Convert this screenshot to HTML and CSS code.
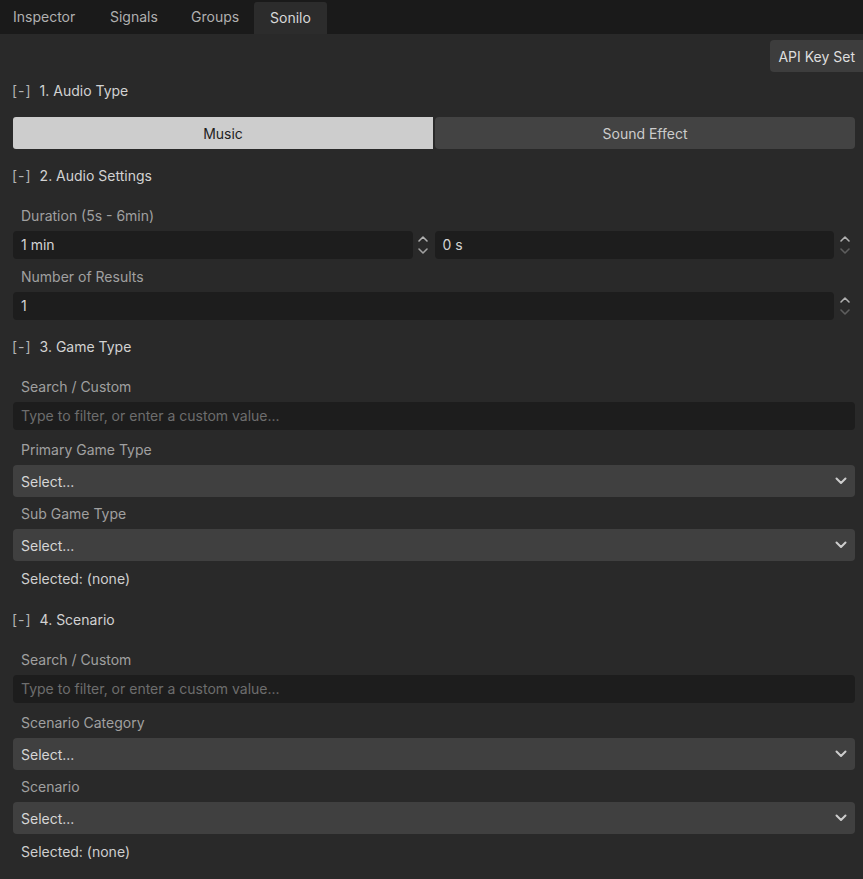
FILE: index.html
```html
<!DOCTYPE html>
<html lang="en">
<head>
  <meta charset="UTF-8">
  <title>Sonilo</title>
  <link rel="stylesheet" href="styles.css">
</head>
<body>
  <div class="tabs">
    <div class="tab">Inspector</div>
    <div class="tab">Signals</div>
    <div class="tab">Groups</div>
    <div class="tab active">Sonilo</div>
  </div>

  <div class="panel">
    <div class="top-row">
      <button class="btn api-btn">API Key Set</button>
    </div>

    <div class="section-head"><span class="fold">[-]</span> 1. Audio Type</div>
    <div class="toggle">
      <button class="toggle-btn selected">Music</button>
      <button class="toggle-btn">Sound Effect</button>
    </div>

    <div class="section-head"><span class="fold">[-]</span> 2. Audio Settings</div>
    <div class="section-body">
      <div class="label">Duration (5s - 6min)</div>
      <div class="num-row">
        <div class="num-group">
          <div class="input">1 min</div>
          <div class="spin">
            <svg width="12" height="20" viewBox="0 0 12 20"><path d="M2 6 L6 2 L10 6" class="up"/><path d="M2 14 L6 18 L10 14" class="down"/></svg>
          </div>
        </div>
        <div class="num-group">
          <div class="input">0 s</div>
          <div class="spin">
            <svg width="12" height="20" viewBox="0 0 12 20"><path d="M2 6 L6 2 L10 6" class="up"/><path d="M2 14 L6 18 L10 14" class="down off"/></svg>
          </div>
        </div>
      </div>
      <div class="label">Number of Results</div>
      <div class="num-row">
        <div class="num-group">
          <div class="input">1</div>
          <div class="spin">
            <svg width="12" height="20" viewBox="0 0 12 20"><path d="M2 6 L6 2 L10 6" class="up"/><path d="M2 14 L6 18 L10 14" class="down off"/></svg>
          </div>
        </div>
      </div>
    </div>

    <div class="section-head"><span class="fold">[-]</span> 3. Game Type</div>
    <div class="section-body">
      <div class="label">Search / Custom</div>
      <div class="input search placeholder">Type to filter, or enter a custom value...</div>
      <div class="label">Primary Game Type</div>
      <div class="select">Select...
        <svg width="12" height="8" viewBox="0 0 12 8"><path d="M1.5 1.5 L6 6 L10.5 1.5"/></svg>
      </div>
      <div class="label">Sub Game Type</div>
      <div class="select">Select...
        <svg width="12" height="8" viewBox="0 0 12 8"><path d="M1.5 1.5 L6 6 L10.5 1.5"/></svg>
      </div>
      <div class="selected-text">Selected: (none)</div>
    </div>

    <div class="section-head"><span class="fold">[-]</span> 4. Scenario</div>
    <div class="section-body">
      <div class="label">Search / Custom</div>
      <div class="input search placeholder">Type to filter, or enter a custom value...</div>
      <div class="label">Scenario Category</div>
      <div class="select">Select...
        <svg width="12" height="8" viewBox="0 0 12 8"><path d="M1.5 1.5 L6 6 L10.5 1.5"/></svg>
      </div>
      <div class="label">Scenario</div>
      <div class="select">Select...
        <svg width="12" height="8" viewBox="0 0 12 8"><path d="M1.5 1.5 L6 6 L10.5 1.5"/></svg>
      </div>
      <div class="selected-text">Selected: (none)</div>
    </div>
  </div>
</body>
</html>
```

FILE: styles.css
```css
:root {
  --bg: #292929;
  --tabbar: #1a1a1a;
  --tab-active: #2c2c2c;
  --field: #1d1d1d;
  --select: #404040;
  --text: #cfcfcf;
  --muted: #a0a0a0;
}

* {
  margin: 0;
  padding: 0;
  box-sizing: border-box;
}

body {
  background: var(--bg);
  font-family: Inter, 'Noto Sans', sans-serif;
  font-size: 14px;
  color: var(--text);
  overflow: hidden;
}

/* tab strip */
.tabs {
  display: flex;
  height: 34px;
  background: var(--tabbar);
}

.tab {
  line-height: 34px;
  color: #b0b0b0;
}

.tab:nth-child(1) { width: 96px; padding-left: 13px; }
.tab:nth-child(2) { width: 80px; padding-left: 14px; }
.tab:nth-child(3) { width: 78px; padding-left: 15px; }

.tab.active {
  width: 73px;
  padding-left: 16px;
  margin-top: 2px;
  line-height: 32px;
  background: var(--tab-active);
  color: #d8d8d8;
  border-radius: 3px 3px 0 0;
}

.panel {
  display: flex;
  flex-direction: column;
  padding: 0 8px 0 13px;
}

.top-row {
  display: flex;
  justify-content: flex-end;
  margin-top: 6px;
  margin-right: -14px;
}

.btn {
  font-family: inherit;
  font-size: 14px;
  border: none;
}

.api-btn {
  height: 32px;
  padding: 0 14px 0 8px;
  background: #3d3d3d;
  color: #dedede;
  border-radius: 4px;
}

.section-head {
  height: 28px;
  line-height: 28px;
  margin-top: 13px;
  margin-left: -1px;
  color: #d2d2d2;
}

.top-row + .section-head {
  margin-top: 5px;
}

.fold {
  color: #b4b4b4;
  margin-right: 4px;
  letter-spacing: 1px;
}

.toggle {
  display: flex;
  gap: 2px;
  margin-top: 12px;
}

.toggle-btn {
  flex: 1;
  height: 32px;
  border: none;
  font-family: inherit;
  font-size: 14px;
  background: #434343;
  color: #cccccc;
  border-radius: 4px;
}

.toggle-btn.selected {
  background: #cdcdcd;
  color: #1e1e1e;
  border-radius: 3px 0 0 3px;
}

.section-body {
  display: flex;
  flex-direction: column;
  padding-top: 16px;
}

.label {
  height: 20px;
  line-height: 20px;
  padding-left: 8px;
  color: var(--muted);
  margin-bottom: 5px;
}

.num-row {
  display: flex;
  gap: 1px;
  margin-bottom: 8px;
}

.section-body > .num-row:last-child {
  margin-bottom: 0;
}

.num-group {
  flex: 1;
  display: flex;
}

.input {
  flex: 1;
  height: 28px;
  line-height: 28px;
  padding-left: 8px;
  background: var(--field);
  border-radius: 4px;
  color: #d4d4d4;
}

.spin {
  width: 21px;
  display: flex;
  align-items: center;
  justify-content: center;
}

.spin path {
  fill: none;
  stroke-width: 1.6;
  stroke-linecap: round;
  stroke-linejoin: round;
}

.spin .up { stroke: #b0b0b0; }
.spin .down { stroke: #a0a0a0; }
.spin .down.off { stroke: #5e5e5e; }

.search {
  flex: none;
  margin-bottom: 10px;
}

.placeholder {
  color: #6d6d6d;
}

.select {
  height: 32px;
  padding: 0 8px;
  background: var(--select);
  border-radius: 4px;
  color: #d6d6d6;
  display: flex;
  justify-content: space-between;
  align-items: center;
  margin-bottom: 7px;
}

.select path {
  fill: none;
  stroke: #cdcdcd;
  stroke-width: 2;
  stroke-linecap: round;
  stroke-linejoin: round;
}

.selected-text {
  height: 20px;
  line-height: 20px;
  padding-left: 8px;
  margin-top: 1px;
  margin-bottom: 4px;
  color: #cfcfcf;
}
```
